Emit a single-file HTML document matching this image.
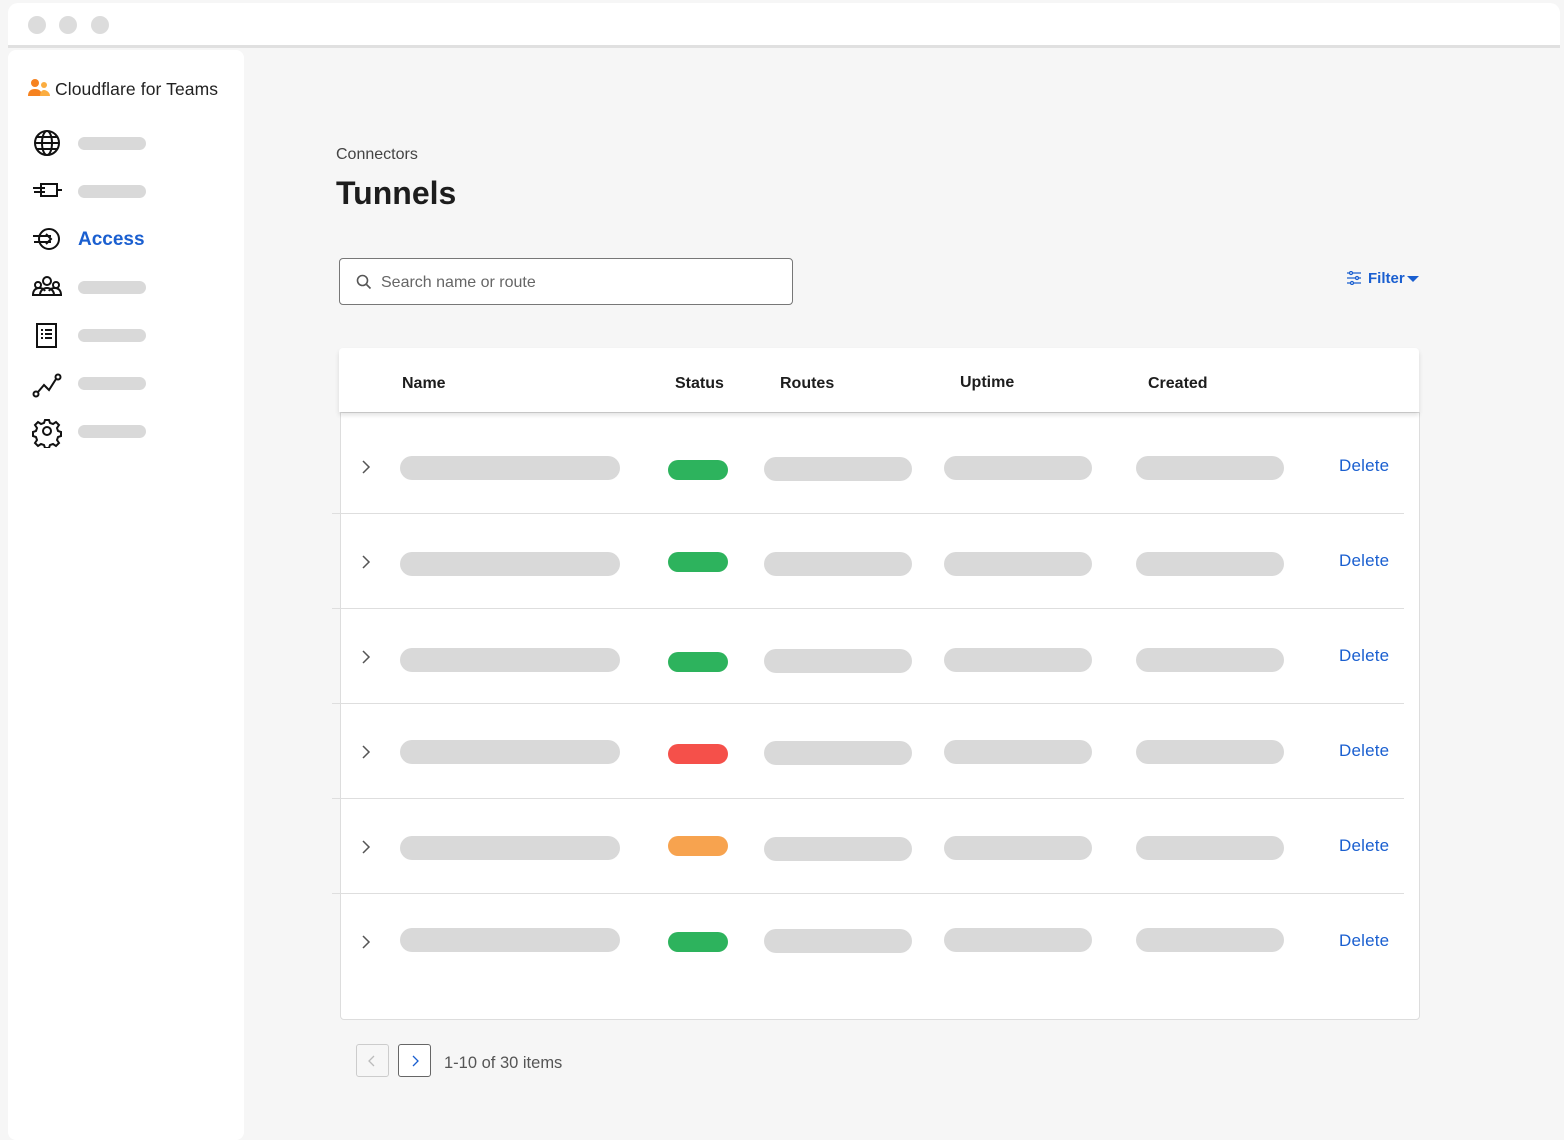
<!DOCTYPE html>
<html><head><style>
*{margin:0;padding:0;box-sizing:border-box}
body{width:1564px;height:1136px;background:#f6f6f6;font-family:"Liberation Sans",sans-serif;position:relative;overflow:hidden}
.a{position:absolute}
.pill{position:absolute;height:24px;border-radius:12px;background:#d9d9d9}
.sp{position:absolute;left:78px;width:68px;height:13px;border-radius:7px;background:#d9d9d9}
.del{position:absolute;left:1339px;color:#1a5fd0;font-size:17px;letter-spacing:.2px}
.sep{position:absolute;left:332px;width:1072px;height:1px;background:#dedede}
.hd{position:absolute;top:375px;font-weight:bold;font-size:16px;color:#1d1d1d}
</style></head><body>
<div class="a" style="left:8px;top:3px;width:1552px;height:44px;background:#fff;border-radius:10px 10px 0 0"></div>
<div class="a" style="left:8px;top:45px;width:1552px;height:3px;background:#e0e0e0"></div>
<div class="a" style="left:28px;top:16px;width:18px;height:18px;border-radius:50%;background:#dcdcdc"></div>
<div class="a" style="left:59px;top:16px;width:18px;height:18px;border-radius:50%;background:#dcdcdc"></div>
<div class="a" style="left:91px;top:16px;width:18px;height:18px;border-radius:50%;background:#dcdcdc"></div>
<div class="a" style="left:8px;top:50px;width:236px;height:1090px;background:#fff;border-radius:8px"></div>
<svg class="a" style="left:27px;top:78px" width="24" height="20" viewBox="0 0 24 20"><circle cx="8" cy="5" r="4" fill="#f6821f"/><circle cx="17" cy="7" r="3" fill="#fbad41"/><path d="M1 18c0-5 3-7 7-7s7 2 7 7z" fill="#f6821f"/><path d="M13 18c0-4 2-6 4-6s6 2 6 6z" fill="#fbad41"/></svg>
<div class="a" style="left:55px;top:79px;font-size:17.5px;color:#222;letter-spacing:.1px">Cloudflare for Teams</div>
<svg class="a" style="left:32px;top:128px" width="30" height="320" viewBox="0 0 30 320" fill="none" stroke="#111" stroke-width="2">
<circle cx="15" cy="15" r="12"/><ellipse cx="15" cy="15" rx="5" ry="12"/><path d="M3 15h24M5 9h20M5 21h20"/>
<path d="M9 56h16v12H9zM25 62h5M1 60h12M2 64h11"/>
<circle cx="17" cy="111" r="10"/><path d="M1 108h18M2 114h17M14 106l5 5-5 5"/>
<circle cx="15" cy="153" r="4"/><circle cx="6" cy="157" r="3"/><circle cx="24" cy="157" r="3"/><path d="M1 167c0-5 3-7 6-7s5 1 6 3M29 167c0-5-3-7-6-7s-5 1-6 3M8 167c0-4 3-7 7-7s7 3 7 7M0 167h30"/>
<rect x="5" y="196" width="19" height="23"/><path d="M9 202h2M13 202h7M9 206h2M13 206h7M9 210h2M13 210h7"/>
<circle cx="4" cy="266" r="2.5"/><circle cx="26" cy="249" r="2.5"/><path d="M6 264l6-7 5 5 7-11"/>
<circle cx="15" cy="303" r="4"/><path d="M13 292h4l1 3 3 1 3-2 3 3-2 3 1 3 3 1v4l-3 1-1 3 2 3-3 3-3-2-3 1-1 3h-4l-1-3-3-1-3 2-3-3 2-3-1-3-3-1v-4l3-1 1-3-2-3 3-3 3 2 3-1z"/>
</svg>
<div class="sp" style="top:137px"></div><div class="sp" style="top:185px"></div>
<div class="a" style="left:78px;top:229px;font-size:19px;font-weight:bold;color:#1a5fd0">Access</div>
<div class="sp" style="top:281px"></div><div class="sp" style="top:329px"></div><div class="sp" style="top:377px"></div><div class="sp" style="top:425px"></div>
<div class="a" style="left:336px;top:146px;font-size:16px;color:#444">Connectors</div>
<div class="a" style="left:336px;top:175px;font-size:32px;font-weight:bold;color:#1d1d1d">Tunnels</div>
<div class="a" style="left:339px;top:258px;width:454px;height:47px;border:1px solid #777;border-radius:4px;background:#fff"></div>
<svg class="a" style="left:356px;top:274px" width="16" height="16" viewBox="0 0 16 16" fill="none" stroke="#555" stroke-width="1.6"><circle cx="6.5" cy="6.5" r="5"/><path d="M10.5 10.5l4 4"/></svg>
<div class="a" style="left:381px;top:274px;font-size:16px;color:#666">Search name or route</div>
<svg class="a" style="left:1346px;top:271px" width="16" height="14" viewBox="0 0 16 14" fill="none" stroke="#1a5fd0" stroke-width="1.3"><path d="M1 2h14M1 7h14M1 12h14"/><circle cx="5" cy="2" r="1.5" fill="#fff"/><circle cx="11" cy="7" r="1.5" fill="#fff"/><circle cx="6" cy="12" r="1.5" fill="#fff"/></svg>
<div class="a" style="left:1368px;top:270px;font-size:15px;font-weight:bold;color:#1a5fd0">Filter</div>
<svg class="a" style="left:1406px;top:275px" width="14" height="8"><path d="M1 1h12L7 7z" fill="#1a5fd0"/></svg>
<div class="a" style="left:340px;top:412px;width:1080px;height:608px;background:#fff;border:1px solid #ddd;border-radius:0 0 4px 4px"></div>
<div class="a" style="left:339px;top:348px;width:1080px;height:64px;background:#fff;border-radius:4px 4px 0 0;box-shadow:0 3px 5px rgba(0,0,0,.12)"></div>
<div class="hd" style="left:402px">Name</div><div class="hd" style="left:675px">Status</div><div class="hd" style="left:780px">Routes</div><div class="hd" style="left:960px;top:374px">Uptime</div><div class="hd" style="left:1148px">Created</div>
<div class="sep" style="top:513px"></div><div class="sep" style="top:608px"></div><div class="sep" style="top:703px"></div><div class="sep" style="top:798px"></div><div class="sep" style="top:893px"></div>
<div class="pill" style="left:400px;top:456px;width:220px"></div><div class="pill" style="left:668px;top:460px;width:60px;height:20px;background:#2db35d"></div><div class="pill" style="left:764px;top:457px;width:148px"></div><div class="pill" style="left:944px;top:456px;width:148px"></div><div class="pill" style="left:1136px;top:456px;width:148px"></div><div class="del" style="top:456px">Delete</div>
<div class="pill" style="left:400px;top:552px;width:220px"></div><div class="pill" style="left:668px;top:552px;width:60px;height:20px;background:#2db35d"></div><div class="pill" style="left:764px;top:552px;width:148px"></div><div class="pill" style="left:944px;top:552px;width:148px"></div><div class="pill" style="left:1136px;top:552px;width:148px"></div><div class="del" style="top:551px">Delete</div>
<div class="pill" style="left:400px;top:648px;width:220px"></div><div class="pill" style="left:668px;top:652px;width:60px;height:20px;background:#2db35d"></div><div class="pill" style="left:764px;top:649px;width:148px"></div><div class="pill" style="left:944px;top:648px;width:148px"></div><div class="pill" style="left:1136px;top:648px;width:148px"></div><div class="del" style="top:646px">Delete</div>
<div class="pill" style="left:400px;top:740px;width:220px"></div><div class="pill" style="left:668px;top:744px;width:60px;height:20px;background:#f5504a"></div><div class="pill" style="left:764px;top:741px;width:148px"></div><div class="pill" style="left:944px;top:740px;width:148px"></div><div class="pill" style="left:1136px;top:740px;width:148px"></div><div class="del" style="top:741px">Delete</div>
<div class="pill" style="left:400px;top:836px;width:220px"></div><div class="pill" style="left:668px;top:836px;width:60px;height:20px;background:#f7a34f"></div><div class="pill" style="left:764px;top:837px;width:148px"></div><div class="pill" style="left:944px;top:836px;width:148px"></div><div class="pill" style="left:1136px;top:836px;width:148px"></div><div class="del" style="top:836px">Delete</div>
<div class="pill" style="left:400px;top:928px;width:220px"></div><div class="pill" style="left:668px;top:932px;width:60px;height:20px;background:#2db35d"></div><div class="pill" style="left:764px;top:929px;width:148px"></div><div class="pill" style="left:944px;top:928px;width:148px"></div><div class="pill" style="left:1136px;top:928px;width:148px"></div><div class="del" style="top:931px">Delete</div>
<svg class="a" style="left:360px;top:459px" width="14" height="500" fill="none" stroke="#555" stroke-width="1.5"><path d="M3 2l6 6-6 6M3 97l6 6-6 6M3 192l6 6-6 6M3 287l6 6-6 6M3 382l6 6-6 6M3 477l6 6-6 6"/></svg>
<div class="a" style="left:356px;top:1044px;width:33px;height:33px;border:1px solid #ccc;border-radius:3px"></div>
<div class="a" style="left:398px;top:1044px;width:33px;height:33px;border:1px solid #666;border-radius:3px;background:#fff"></div>
<svg class="a" style="left:366px;top:1054px" width="60" height="14" fill="none" stroke-width="1.3"><path d="M8 2l-5 5 5 5" stroke="#bbb"/><path d="M47 2l5 5-5 5" stroke="#1a5fd0"/></svg>
<div class="a" style="left:444px;top:1054px;font-size:16.5px;color:#555">1-10 of 30 items</div>
</body></html>
